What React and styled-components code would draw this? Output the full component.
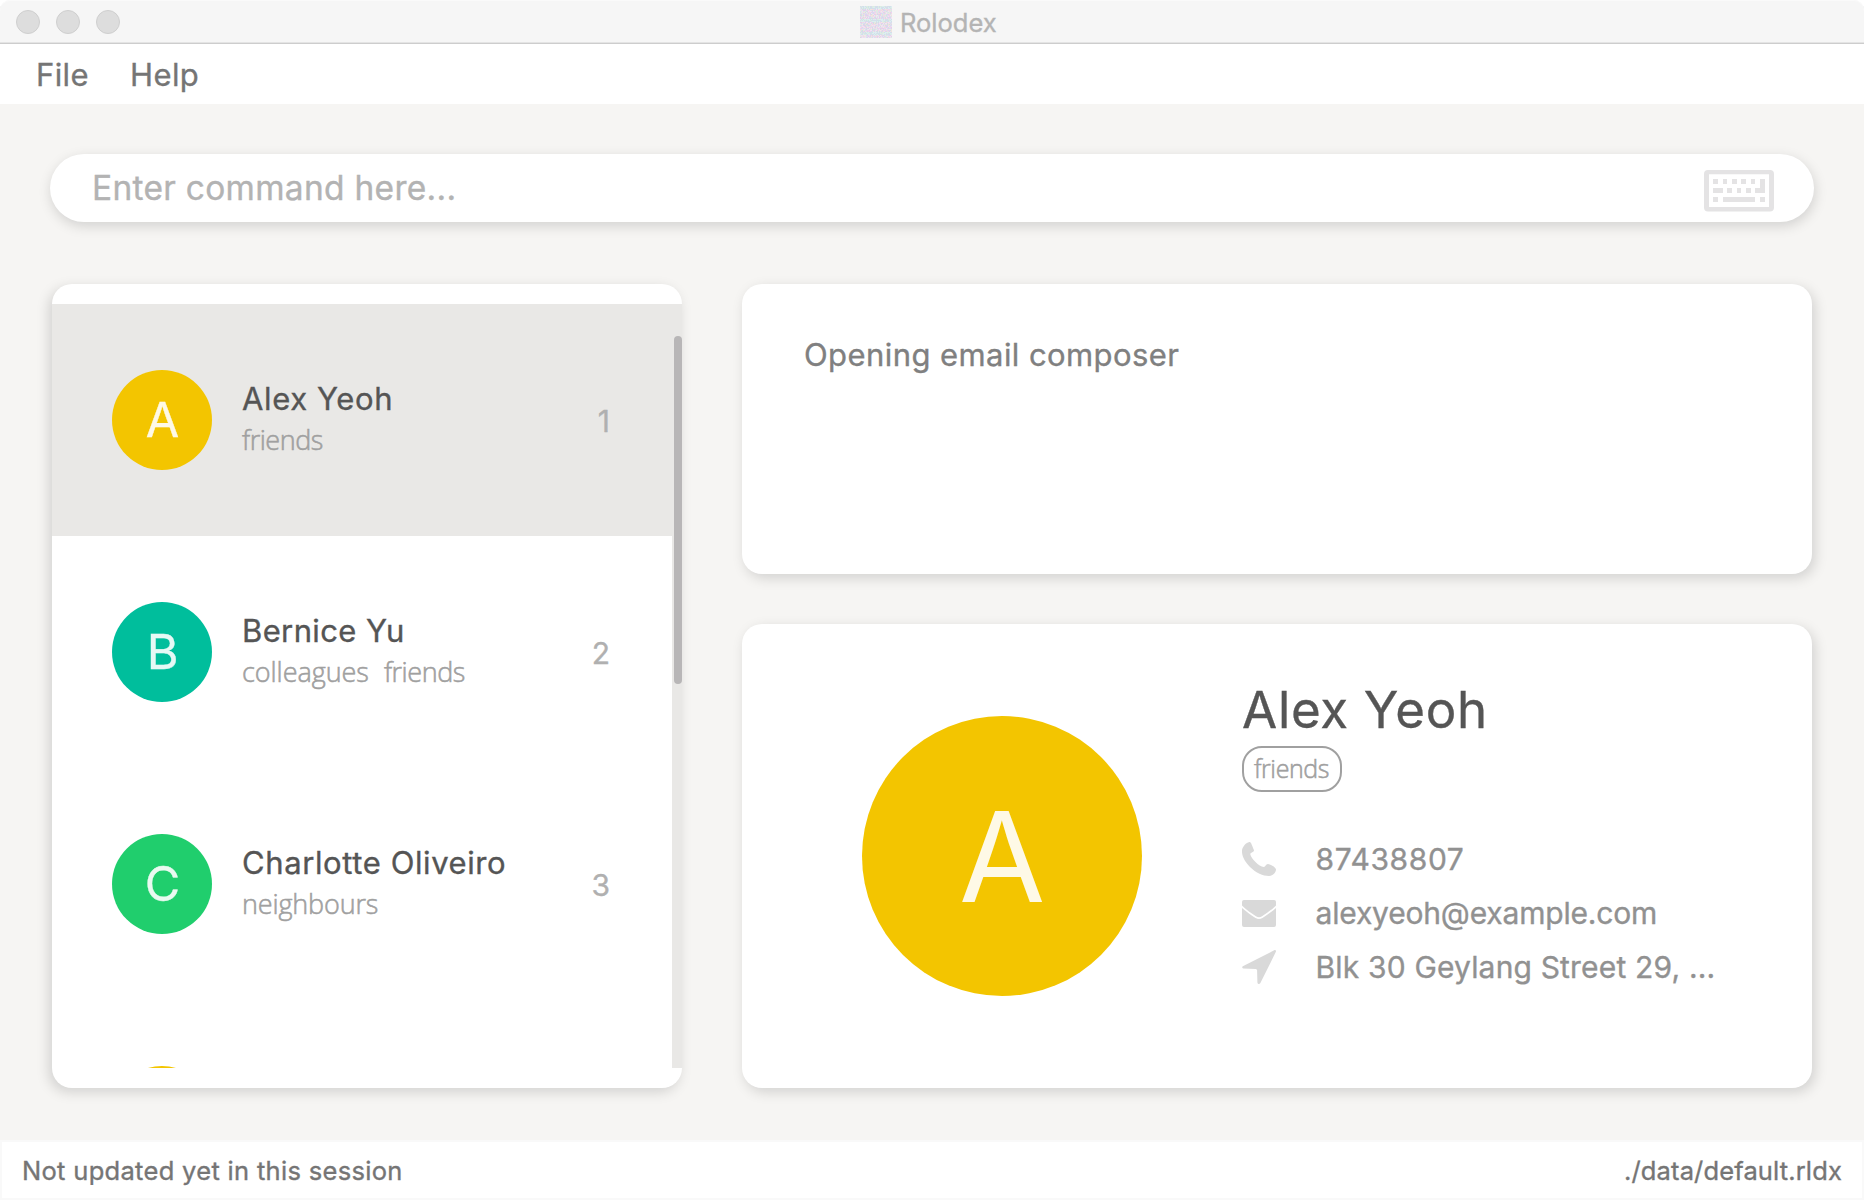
import React from "react";
import styled, { createGlobalStyle } from "styled-components";

const GlobalStyle = createGlobalStyle`
  *, *::before, *::after { box-sizing: border-box; }
  body { margin: 0; background: #fff; }
`;

const Window = styled.div`
  display: flex;
  flex-direction: column;
  width: 1864px;
  height: 1200px;
  overflow: hidden;
  background: #f6f5f3;
  color: #555;
  font-family: Inter, "Liberation Sans", sans-serif;
  font-weight: 400;
  -webkit-text-stroke-width: 0.35px;
  white-space: nowrap;
`;

/* Title bar */
const TitleBarFrame = styled.div`
  flex: none;
  background: #fff;
`;

const TitleBar = styled.header`
  display: flex;
  align-items: center;
  height: 44px;
  padding-left: 16px;
  border-radius: 10px 10px 0 0;
  background: #f6f6f6;
  box-shadow: inset 0 1px 0 #fafafa, inset 0 -1px 0 #cdcdcd, inset 0 -2px 0 #e4e4e4;
`;

const Lights = styled.div`
  display: flex;
  gap: 16px;
`;

const Light = styled.span`
  width: 24px;
  height: 24px;
  border: 1px solid #cfcfcf;
  border-radius: 50%;
  background: #dddddd;
`;

const Title = styled.div`
  display: flex;
  align-items: center;
  gap: 8px;
  margin-left: 740px;
  color: #b4b4b4;
  font-size: 25.5px;
  letter-spacing: 0;
  line-height: 32px;

  span { padding-top: 1px; }
  svg { display: block; }
`;

/* Menu */
const MenuBar = styled.nav`
  flex: none;
  display: flex;
  align-items: center;
  gap: 41px;
  height: 60px;
  padding: 1px 0 0 36px;
  background: #fff;
`;

const MenuItem = styled.span`
  color: #757575;
  font-size: 31px;
  letter-spacing: 0.4px;
`;

/* Body */
const Body = styled.main`
  flex: 1;
  display: flex;
  flex-direction: column;
  gap: 62px;
  padding: 50px 50px 52px;
`;

const CommandBox = styled.div`
  flex: none;
  display: flex;
  align-items: center;
  justify-content: space-between;
  height: 68px;
  padding: 0 40px 0 42px;
  border-radius: 34px;
  background: #fff;
  box-shadow: 1px 4px 13px rgba(0, 0, 0, 0.15);
`;

const Placeholder = styled.span`
  color: #b3b3b3;
  font-size: 33.5px;
  letter-spacing: 0.28px;
`;

const KeyboardSvg = styled.svg`
  display: block;
  margin-top: 6px;
  fill: #e4e3e4;
`;

const Columns = styled.div`
  flex: 1;
  display: grid;
  grid-template-columns: 630px 1070px;
  gap: 60px;
  min-height: 0;
  padding: 0 2px;
`;

const Panel = styled.section`
  min-height: 0;
  border-radius: 20px;
  background: #fff;
  box-shadow: ${(p) => p.$lean || 3}px 4px 13px rgba(0, 0, 0, 0.15);
`;

const ListPanel = styled(Panel)`
  padding: 20px 0;
`;

const ListViewport = styled.div`
  display: flex;
  height: 764px;
  overflow: hidden;
`;

const Rows = styled.div`
  flex: 1;
`;

const Track = styled.div`
  display: flex;
  flex: none;
  justify-content: flex-end;
  width: 10px;
  padding-top: 32px;
  background: #e9e8e6;
`;

const Thumb = styled.div`
  width: 8px;
  height: 348px;
  border-radius: 4px;
  background: #b8b6b7;
`;

const PersonRow = styled.div`
  display: flex;
  align-items: center;
  height: 232px;
  padding: 0 62px 0 60px;
  background: ${(p) => (p.$selected ? "#e9e8e6" : "#fff")};
`;

const Avatar = styled.div`
  flex: none;
  display: flex;
  align-items: center;
  justify-content: center;
  width: ${(p) => p.$size}px;
  height: ${(p) => p.$size}px;
  padding-left: 1px;
  border-radius: 50%;
  background: ${(p) => p.$color};
  color: #fff9e8;
  color: color-mix(in srgb, #fff 90%, ${(p) => p.$color});
  font-size: ${(p) => p.$font}px;
  line-height: 1;
`;

const PersonText = styled.div`
  flex: 1;
  margin-left: 30px;
  padding-bottom: 2px;
  line-height: 41px;
`;

const PersonName = styled.div`
  color: #555;
  font-size: 31px;
  letter-spacing: ${(p) => p.$track}px;
`;

const Tags = styled.div`
  display: flex;
  gap: 15px;
`;

const Tag = styled.span`
  color: #a0a0a0;
  font-family: "Open Sans", "Noto Sans", sans-serif;
  font-size: 27px;
  font-weight: 300;
  -webkit-text-stroke-width: 0.55px;
  letter-spacing: ${(p) => p.$track || 0}px;
`;

const Index = styled.span`
  padding-top: 2px;
  color: #b0b0b0;
  font-size: 30px;
`;

const RightColumn = styled.div`
  display: flex;
  flex-direction: column;
  gap: 50px;
  min-height: 0;
`;

const ResultPanel = styled(Panel)`
  flex: none;
  height: 290px;
  padding: 51px 62px;
  color: #808080;
  font-size: 31px;
  letter-spacing: 0.42px;
  line-height: 40px;
`;

const DetailPanel = styled(Panel)`
  flex: 1;
  display: flex;
  align-items: flex-start;
  gap: 100px;
  padding: 0 0 0 120px;

  > ${Avatar} {
    margin-top: 92px;
    padding-left: 0;
    -webkit-text-stroke-width: 0;
  }
`;

const Info = styled.div`
  display: flex;
  flex-direction: column;
  align-items: flex-start;
  padding-top: 55px;
`;

const DetailName = styled.h1`
  margin: 0;
  color: #555;
  font-size: 51px;
  font-weight: 400;
  letter-spacing: 0.7px;
  line-height: 61px;
`;

const Pill = styled(Tag)`
  display: flex;
  align-items: center;
  justify-content: center;
  width: 100px;
  height: 46px;
  margin: 6px 0 40px;
  padding: 0 1px 2px 0;
  border: 2px solid #a0a0a0;
  border-radius: 20px;
  font-size: 25px;
`;

const ContactLine = styled.div`
  display: flex;
  align-items: center;
  gap: 39.5px;
  height: 54px;
  color: #919191;
  font-size: 30px;
  letter-spacing: ${(p) => p.$track}px;
`;

const ContactIcon = styled.svg`
  display: block;
  flex: none;
  width: 34px;
  height: 34px;
  fill: #d9d9d9;
`;

/* Footer */
const StatusBar = styled.footer`
  flex: none;
  display: flex;
  align-items: center;
  justify-content: space-between;
  height: 60px;
  padding: 0 20px;
  border: 2px solid #f9f9f9;
  background: #fff;
  color: #757575;
  font-size: 25.5px;
  letter-spacing: 0.31px;
`;

const FilePath = styled.span`
  letter-spacing: 0.14px;
`;

/* Pastel speckle for the application icon */
const speckles = (() => {
  const tints = ["#edd3f0", "#dcd6f0", "#d6e4ee", "#f3d9e2", "#ebe3ee", "#d3dfe4", "#f3e2f3", "#dfeae4", "#e4d0ea", "#f0e6dc"];
  const cool = ["#d0e2e8", "#dceef0", "#d6dcec", "#dcece2"];
  let seed = 7;
  const next = (n) => {
    seed = (seed * 1103515 + 12345) % 2147483;
    return Math.floor((seed / 2147483) * n);
  };
  const out = [];
  for (let y = 0; y < 32; y += 1) {
    const set = y % 13 < 3 ? cool : tints;
    for (let x = 0; x < 32; x += 1) out.push([x, y, set[next(set.length)]]);
  }
  return out;
})();

const AppIcon = () => (
  <svg width="32" height="32" viewBox="0 0 32 32" shapeRendering="crispEdges">
    {speckles.map(([x, y, c]) => (
      <rect key={`${x}-${y}`} x={x} y={y} width="1" height="1" fill={c} />
    ))}
  </svg>
);

const KeyboardIcon = () => (
  <KeyboardSvg width="70" height="42" viewBox="0 0 70 42">
    <path fillRule="evenodd" d="M4 0H66Q70 0 70 4V37.5Q70 41.5 66 41.5H4Q0 41.5 0 37.5V4Q0 0 4 0ZM5 4.2V37H65V4.2Z" />
    <path d="M9 9h5v5H9zM19 9h4v5h-4zM28 9h5v5h-5zM37 9h5v5h-5zM47 9h4v5h-4zM9 18h10v5H9zM23 18h5v5h-5zM33 18h4v5h-4zM42 18h5v5h-5zM56 9h5v14H51v-5h5zM9 27h5v5H9zM19 27h32v5H19zM56 27h5v5h-5z" />
  </KeyboardSvg>
);

const icons = {
  phone: <path d="M0 8C1 4 4 .8 7.3 0C9.2 0 9.6 2.6 12 8.3C12 10.3 8.5 10.5 8.3 12.2C9 16.5 17 24.6 21.8 25C23.6 25 23.6 22 26 22C28 22.2 33.4 25 34 27.3C34 31 31 33.5 27 34C21 34 14 31 8 25C3 20-.5 14 0 8Z" />,
  mail: (
    <g transform="translate(0 4)">
      <path d="M0 2Q0 0 2 0H32Q34 0 34 2V5.5C30 9.5 25 13 20 16.3Q17 18.2 14 16.3C9 13 4 9.5 0 5.5Z" />
      <path d="M0 8C4 11.5 9 15 13.5 18Q17 20.2 20.5 18C25 15 30 11.5 34 8V25Q34 27 32 27H2Q0 27 0 25Z" />
    </g>
  ),
  place: <path d="M32.6.1Q34.3 0 34 1.6L18.4 33Q17.4 34.4 16.1 33.8Q15.4 33.3 15.4 32.2L15.1 20.2Q15 19 13.8 18.9L1.2 18.5Q-.6 17.5 .8 16.2Z" />,
};

const people = [
  { name: "Alex Yeoh", track: 0.62, color: "#f3c500", tags: [["friends", -0.45]] },
  { name: "Bernice Yu", track: 0.38, color: "#00be9c", tags: [["colleagues", -0.05], ["friends", -0.45]] },
  { name: "Charlotte Oliveiro", track: 0.6, color: "#20ce6d", tags: [["neighbours", -0.15]] },
  { name: "", track: 0, color: "#f3c500", tags: [] },
];

const contacts = [
  { icon: "phone", text: "87438807", track: 0.6 },
  { icon: "mail", text: "alexyeoh@example.com", track: -0.18 },
  { icon: "place", text: "Blk 30 Geylang Street 29, ...", track: 0.17 },
];

export default function App() {
  return (
    <Window>
      <GlobalStyle />
      <TitleBarFrame>
        <TitleBar>
          <Lights>
            <Light />
            <Light />
            <Light />
          </Lights>
          <Title>
            <AppIcon />
            <span>Rolodex</span>
          </Title>
        </TitleBar>
      </TitleBarFrame>
      <MenuBar>
        <MenuItem>File</MenuItem>
        <MenuItem>Help</MenuItem>
      </MenuBar>
      <Body>
        <CommandBox>
          <Placeholder>Enter command here...</Placeholder>
          <KeyboardIcon />
        </CommandBox>
        <Columns>
          <ListPanel $lean={-3}>
            <ListViewport>
              <Rows>
                {people.map((p, i) => (
                  <PersonRow key={i} $selected={i === 0}>
                    <Avatar $size={100} $font={48.5} $color={p.color}>{p.name[0]}</Avatar>
                    {p.name && (
                      <>
                        <PersonText>
                          <PersonName $track={p.track}>{p.name}</PersonName>
                          <Tags>
                            {p.tags.map(([t, track]) => (
                              <Tag key={t} $track={track}>{t}</Tag>
                            ))}
                          </Tags>
                        </PersonText>
                        <Index>{i + 1}</Index>
                      </>
                    )}
                  </PersonRow>
                ))}
              </Rows>
              <Track>
                <Thumb />
              </Track>
            </ListViewport>
          </ListPanel>
          <RightColumn>
            <ResultPanel>Opening email composer</ResultPanel>
            <DetailPanel>
              <Avatar $size={280} $font={125} $color="#f3c500">A</Avatar>
              <Info>
                <DetailName>Alex Yeoh</DetailName>
                <Pill $track={-0.4}>friends</Pill>
                {contacts.map((c) => (
                  <ContactLine key={c.icon} $track={c.track}>
                    <ContactIcon viewBox="0 0 34 34">{icons[c.icon]}</ContactIcon>
                    {c.text}
                  </ContactLine>
                ))}
              </Info>
            </DetailPanel>
          </RightColumn>
        </Columns>
      </Body>
      <StatusBar>
        <span>Not updated yet in this session</span>
        <FilePath>./data/default.rldx</FilePath>
      </StatusBar>
    </Window>
  );
}
